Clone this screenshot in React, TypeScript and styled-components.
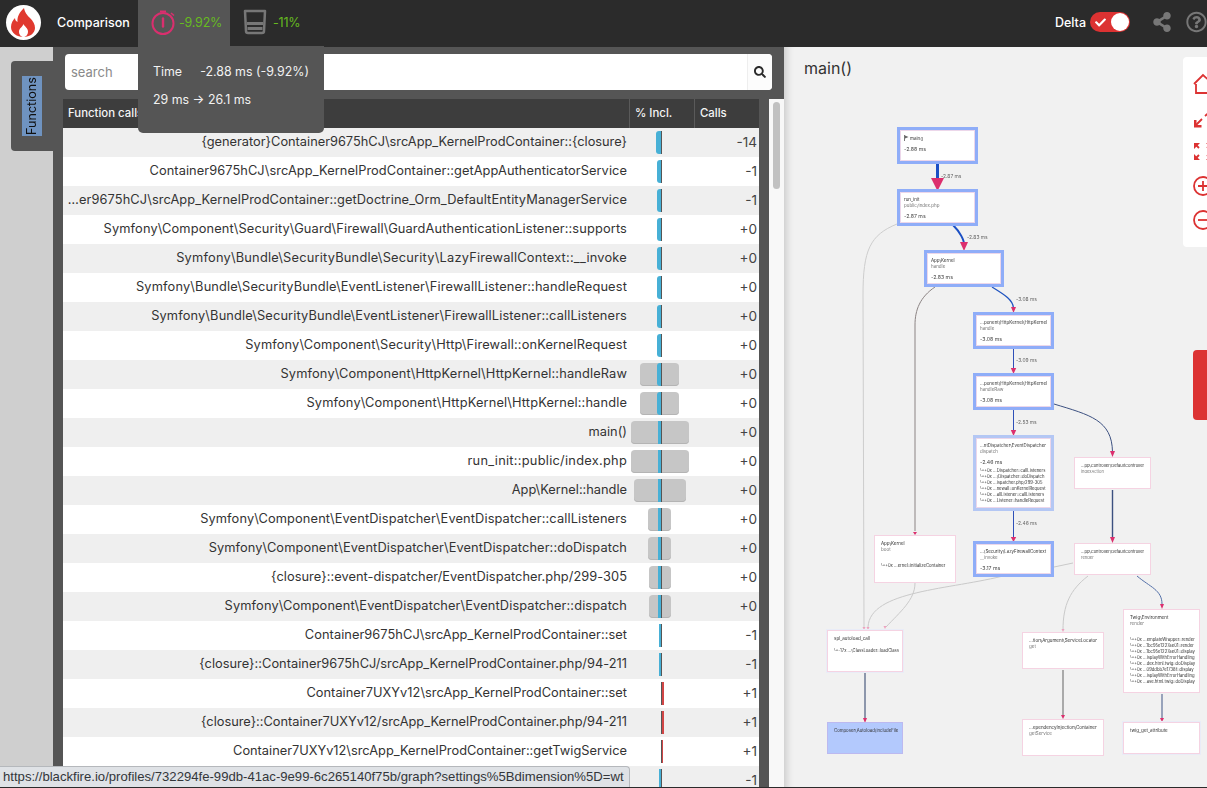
import React from "react";
import styled, { createGlobalStyle, css } from "styled-components";
import { FaSearch, FaShareAlt, FaRegQuestionCircle, FaCheck } from "react-icons/fa";

const UI = `"Inter", "Noto Sans", "Liberation Sans", sans-serif`;

const Global = createGlobalStyle`
  html, body { margin: 0; padding: 0; height: 788px; overflow: hidden; background: #f1f1f1; }
  #root { height: 788px; }
  * { box-sizing: border-box; }
`;

const Page = styled.div`
  width: 1207px; height: 788px; display: flex; flex-direction: column; overflow: hidden; position: relative;
  font-family: ${UI}; font-size: 13px; color: #333;
  &::after { content: ""; position: absolute; left: 0; right: 0; bottom: 0; height: 1px; background: #2b2b2b; z-index: 8; }
`;
const Header = styled.header`
  height: 47px; flex: none; background: #2b2b2b; display: flex; align-items: center; position: relative; z-index: 5;
`;
const Logo = styled.div`
  width: 35px; height: 35px; border-radius: 50%; background: #fff; margin: 0 0 3px 6px; display: flex; align-items: center; justify-content: center;
`;
const Title = styled.div`
  color: #fff; font-weight: 500; font-size: 12.5px; margin-left: 16px; width: 81px; margin-bottom: 3px;
`;
const Metric = styled.div<{ $active?: boolean; $w: number }>`
  width: ${p => p.$w}px; height: 47px; display: flex; align-items: center; padding-left: 13px; gap: 6px; padding-bottom: 3px;
  color: #67bb1f; font-size: 12.5px; letter-spacing: -0.2px;
  ${p => p.$active && css`background: #555;`}
`;
const MetricValue = styled.span<{ $shift?: boolean }>`${p => p.$shift && css`margin-left: -4px;`}`;
const Spacer = styled.div`flex: 1;`;
const DeltaLabel = styled.div`color: #fff; font-weight: 500; font-size: 12.5px; margin-bottom: 3px;`;
const Toggle = styled.div`
  width: 40px; height: 20px; background: #dc3232; border-radius: 10px; margin: 0 22px 3px 4px; position: relative; display: flex; align-items: center; padding-left: 5px; color: #fff; font-size: 11px;
  &::after { content: ""; position: absolute; right: 1px; top: 1px; width: 18px; height: 18px; border-radius: 50%; background: #fff; }
`;
const HeadIcon = styled.div<{ $w: number }>`
  width: ${p => p.$w}px; color: #777; display: flex; margin-bottom: 3px; flex: none;
`;
const Tip = styled.div`
  position: absolute; left: 138px; top: 46px; width: 186px; height: 87px; background: #555; border-radius: 0 0 5px 5px; z-index: 6; color: #f2f2f2; font-size: 12.4px; padding: 16px 15px; white-space: nowrap;
`;
const TipRow = styled.div`display: flex; height: 28px; line-height: 19px;`;
const TipKey = styled.span`width: 50px;`;

const Main = styled.div`flex: 1; display: flex; min-height: 0;`;
const Rail = styled.div`width: 53px; flex: none; background: #cfcfcf; padding: 14px 0 0 11px;`;
const RailTab = styled.div`
  width: 42px; height: 90px; background: #555; border-radius: 4px 0 0 4px; display: flex; justify-content: center; padding: 15px 0 0 0;
`;
const RailText = styled.span`
  writing-mode: vertical-rl; transform: rotate(180deg); background: #6f93c0; color: #111; height: 60px; width: 20px; font-size: 12.6px; line-height: 20px; text-align: center; white-space: nowrap;
`;
const Panel = styled.div`width: 731px; flex: none; background: #555; padding: 7px 12px 0; display: flex; flex-direction: column; min-height: 0;`;
const Search = styled.div`
  height: 36px; flex: none; background: #fff; border-radius: 4px; display: flex; align-items: center; 
`;
const SearchText = styled.div`flex: 1; color: #8a8a8a; font-size: 13px; padding-left: 6px;`;
const SearchBtn = styled.div`
  width: 25px; height: 36px; background: #fcfcfc; border-left: 1px solid #eee; display: flex; align-items: center; justify-content: center; color: #2b2b2b; font-size: 12px; border-radius: 0 4px 4px 0;
`;
const TableWrap = styled.div`flex: 1; display: flex; gap: 10px; margin: 9px -12px 0 -2px; min-height: 0;`;
const Table = styled.div`width: 696px; flex: none; overflow: hidden;`;
const HeadRow = styled.div`
  height: 29px; background: #3d3d3d; color: #f4f4f4; display: grid; grid-template-columns: 566px 65px 65px; font-weight: 500; font-size: 11.4px; line-height: 29px;
`;
const HeadCell = styled.div<{ $line?: boolean }>`
  padding-left: 5px; ${p => p.$line && css`border-left: 1px solid #5a5a5a;`}
`;
const Row = styled.div<{ $odd: boolean }>`
  height: 29px; display: grid; grid-template-columns: 564px 67px 65px; background: ${p => p.$odd ? "#efefef" : "#fff"}; align-items: center;
`;
const FnName = styled.div<{ $track: number }>`
  white-space: nowrap; overflow: hidden; color: #333; font-size: 12.8px; letter-spacing: ${p => p.$track}px; display: flex; justify-content: flex-end; padding-bottom: 2px;
`;
const BarCell = styled.div`position: relative; height: 23px;`;
const GrayBar = styled.div`position: absolute; top: 0; height: 23px; background: #c6c6c6; border-radius: 4px; box-shadow: inset 0 -1px 0 #b4b4b4;`;
const ValueBar = styled.div<{ $red?: boolean; $round?: boolean }>`
  position: absolute; top: 0; height: 23px; background: ${p => p.$red ? "#d14545" : "#47b0d6"};
  ${p => p.$round && css`border-radius: 3px 0 0 3px;`}
`;
const Axis = styled.div`position: absolute; top: 0; height: 23px; width: 1px; left: 34px; background: #555;`;
const Calls = styled.div`text-align: right; padding: 0 2px 2px 0; font-size: 13.6px; color: #444;`;
const Track = styled.div`width: 15px; flex: none; background: #f8f8f8; padding: 3px 4px 0 4px;`;
const Thumb = styled.div`height: 87px; background: #c1c1c1; border-radius: 4px;`;
const Status = styled.div`
  position: absolute; left: 0; bottom: 1px; width: 630px; height: 21px; background: #dfe2e6; border: 1px solid #b5b8bc; border-left: 0; border-bottom: 0; border-radius: 0 4px 0 0; z-index: 7;
  padding-left: 3px; line-height: 20px; color: #33363a; font-family: "Liberation Sans", sans-serif; font-size: 13.13px; white-space: nowrap; overflow: hidden;
`;

const Graph = styled.div`
  flex: 1; position: relative; background: #f1f1f1; overflow: hidden; box-shadow: inset 10px 0 8px -8px rgba(0,0,0,.18);
`;
const GraphTitle = styled.div`margin: 11px 0 0 20px; font-size: 16px; color: #333; line-height: 20px;`;
const Edges = styled.svg`position: absolute; left: 0; top: 0; width: 423px; height: 741px; filter: blur(.25px);`;
const EdgeLabel = styled.span<{ $x: number; $y: number }>`
  position: absolute; left: ${p => p.$x - 784}px; top: ${p => p.$y - 47}px; font-size: 4.9px; line-height: 6px; color: #666; white-space: nowrap; filter: blur(.25px);
`;
const variantStyle = {
  strong: css`border: 3px solid #8fadf8; box-shadow: inset 0 0 0 1px #ecd7ea; background: #fff;`,
  medium: css`border: 3px solid #b4c7f4; box-shadow: inset 0 0 0 1px #ecd7ea; background: #fff;`,
  plain: css`border: 1px solid #f5d3e2; background: #fff;`,
  halo: css`border: 1px solid #f5d3e2; background: #fff; box-shadow: 0 0 0 1px #e9ecf7;`,
  fill: css`border: 1px solid #bcb9f0; background: #b3c9fd;`,
};
type Variant = keyof typeof variantStyle;
const Node = styled.div<{ $x: number; $y: number; $w: number; $h: number; $v: Variant; $fs: number }>`
  position: absolute; left: ${p => p.$x - 784}px; top: ${p => p.$y - 47}px; width: ${p => p.$w}px; height: ${p => p.$h}px;
  ${p => variantStyle[p.$v]}
  padding: ${p => (p.$v === "strong" || p.$v === "medium") ? "5px 1px 0 4px" : "5px 1px 0 6px"}; font-size: ${p => p.$fs}px; line-height: 6px; color: #333; overflow: hidden; white-space: nowrap; filter: blur(.25px);
`;
const NodeName = styled.div``;
const NodeSub = styled.div`color: #777;`;
const NodeTime = styled.div`margin-top: 4px; color: #444; font-size: 5.2px;`;
const NodeCalls = styled.div<{ $gap: number }>`margin-top: ${p => p.$gap}px; font-size: 4.2px;`;
const Tools = styled.div`
  position: absolute; left: 399px; top: 10px; width: 40px; height: 190px; background: #fff; border-radius: 4px; color: #dc3232;
  display: flex; flex-direction: column; padding: 17px 0 0 10px; gap: 14px;
`;
const RedTab = styled.div`
  position: absolute; left: 409px; top: 303px; width: 30px; height: 70px; background: #dc3232; border-radius: 4px;
`;

const rows: { n: string; c: string; t: number; g?: [number, number]; b: [number, number]; red?: boolean; round?: boolean }[] = [
  { n: "{generator}Container9675hCJ\\srcApp_KernelProdContainer::{closure}", t: 0, c: "-14", b: [656, 662], round: true },
  { n: "Container9675hCJ\\srcApp_KernelProdContainer::getAppAuthenticatorService", t: .08, c: "-1", b: [657, 662], round: true },
  { n: "…er9675hCJ\\srcApp_KernelProdContainer::getDoctrine_Orm_DefaultEntityManagerService", t: .1, c: "-1", b: [657, 662], round: true },
  { n: "Symfony\\Component\\Security\\Guard\\Firewall\\GuardAuthenticationListener::supports", t: .14, c: "+0", b: [657, 662], round: true },
  { n: "Symfony\\Bundle\\SecurityBundle\\Security\\LazyFirewallContext::__invoke", t: .22, c: "+0", b: [657, 662], round: true },
  { n: "Symfony\\Bundle\\SecurityBundle\\EventListener\\FirewallListener::handleRequest", t: .16, c: "+0", b: [657, 662], round: true },
  { n: "Symfony\\Bundle\\SecurityBundle\\EventListener\\FirewallListener::callListeners", t: .145, c: "+0", b: [657, 662], round: true },
  { n: "Symfony\\Component\\Security\\Http\\Firewall::onKernelRequest", t: .14, c: "+0", b: [657, 662], round: true },
  { n: "Symfony\\Component\\HttpKernel\\HttpKernel::handleRaw", t: .14, c: "+0", g: [640, 679], b: [657, 662], round: true },
  { n: "Symfony\\Component\\HttpKernel\\HttpKernel::handle", t: .146, c: "+0", g: [640, 679], b: [657, 662], round: true },
  { n: "main()", t: 0, c: "+0", g: [631, 689], b: [658, 662] },
  { n: "run_init::public/index.php", t: .27, c: "+0", g: [631, 689], b: [658, 662] },
  { n: "App\\Kernel::handle", t: 0, c: "+0", g: [634, 686], b: [658, 662] },
  { n: "Symfony\\Component\\EventDispatcher\\EventDispatcher::callListeners", t: .123, c: "+0", g: [648, 671], b: [658, 662] },
  { n: "Symfony\\Component\\EventDispatcher\\EventDispatcher::doDispatch", t: .11, c: "+0", g: [648, 671], b: [658, 662] },
  { n: "{closure}::event-dispatcher/EventDispatcher.php/299-305", t: .055, c: "+0", g: [649, 671], b: [658, 662] },
  { n: "Symfony\\Component\\EventDispatcher\\EventDispatcher::dispatch", t: .13, c: "+0", g: [649, 671], b: [658, 662] },
  { n: "Container9675hCJ\\srcApp_KernelProdContainer::set", t: .06, c: "-1", b: [659, 662] },
  { n: "{closure}::Container9675hCJ/srcApp_KernelProdContainer.php/94-211", t: .03, c: "-1", b: [659, 662] },
  { n: "Container7UXYv12\\srcApp_KernelProdContainer::set", t: .04, c: "+1", b: [661, 664], red: true },
  { n: "{closure}::Container7UXYv12/srcApp_KernelProdContainer.php/94-211", t: 0, c: "+1", b: [661, 664], red: true },
  { n: "Container7UXYv12\\srcApp_KernelProdContainer::getTwigService", t: 0, c: "+1", b: [661, 663], red: true },
  { n: "", t: 0, c: "-1", b: [659, 662] },
];

type N = { x: number; y: number; w: number; h: number; v: Variant; name?: string; sub?: string; time?: string; calls?: string[]; flag?: boolean; gap?: number; fs?: number };
const nodes: N[] = [
  { x: 897, y: 127, w: 81, h: 37, v: "strong", name: "main()", time: "-2.88 ms", flag: true },
  { x: 897, y: 189, w: 81, h: 37, v: "strong", name: "run_init", sub: "public/index.php", time: "-2.87 ms" },
  { x: 924, y: 250, w: 80, h: 37, v: "strong", name: "App\\Kernel", sub: "handle", time: "-2.83 ms" },
  { x: 973, y: 312, w: 81, h: 37, v: "strong", name: "…ponent\\HttpKernel\\HttpKernel", sub: "handle", time: "-3.08 ms" },
  { x: 973, y: 373, w: 81, h: 37, v: "strong", name: "…ponent\\HttpKernel\\HttpKernel", sub: "handleRaw", time: "-3.08 ms" },
  { x: 973, y: 435, w: 81, h: 76, v: "medium", fs: 4.4, name: "…ntDispatcher\\EventDispatcher", sub: "dispatch", time: "-2.46 ms", gap: 3, calls: ["↳+0x  …Dispatcher::callListeners", "↳+0x  …\\Dispatcher::doDispatch", "↳+0x  …ispatcher.php/299-305", "↳+0x  …newalI::onKernelRequest", "↳+0x  …allListener::callListeners", "↳+0x  …Listener::handleRequest"] },
  { x: 973, y: 541, w: 81, h: 36, v: "strong", fs: 4.4, name: "…\\Security\\LazyFirewallContext", sub: "__invoke", time: "-3.17 ms" },
  { x: 874, y: 535, w: 82, h: 48, v: "plain", name: "App\\Kernel", sub: "boot", gap: 10, calls: ["↳+0x  …ernel::initializeContainer"] },
  { x: 1074, y: 457, w: 77, h: 32, v: "plain", fs: 4.1, name: "…pp\\Controller\\DefaultController", sub: "indexAction" },
  { x: 1074, y: 543, w: 77, h: 32, v: "plain", fs: 4.1, name: "…pp\\Controller\\DefaultController", sub: "render" },
  { x: 827, y: 630, w: 76, h: 42, v: "halo", name: "spl_autoload_call", gap: 6, calls: ["↳-17x  …\\ClassLoader::loadClass"] },
  { x: 827, y: 722, w: 76, h: 32, v: "fill", fs: 4.3, name: "Composer\\Autoload\\includeFile" },
  { x: 1022, y: 632, w: 82, h: 37, v: "plain", name: "…tion\\Argument\\ServiceLocator", sub: "get" },
  { x: 1022, y: 719, w: 82, h: 37, v: "plain", name: "…ependencyInjection\\Container", sub: "getService" },
  { x: 1123, y: 609, w: 77, h: 84, v: "plain", name: "Twig\\Environment", sub: "render", gap: 10, calls: ["↳+0x  …emplateWrapper::render", "↳+0x  …1bc95e1227ae01::render", "↳+0x  …1bc95e1227ae01::display", "↳+0x  …isplayWithErrorHandling", "↳+0x  …dex.html.twig::doDisplay", "↳+0x  …09ddbb7e1738f::display", "↳+0x  …isplayWithErrorHandling", "↳+0x  …ase.html.twig::doDisplay"] },
  { x: 1123, y: 722, w: 77, h: 32, v: "halo", name: "twig_get_attribute" },
];
const labels: [string, number, number][] = [
  ["-2.87 ms", 941, 173], ["-2.83 ms", 967, 234], ["-3.08 ms", 1016, 296], ["-3.09 ms", 1016, 357], ["-2.53 ms", 1016, 419], ["-2.46 ms", 1016, 520],
];
const edges: [string, string, number][] = [
  ["M897 224C870 235 863 250 863 295L864 627", "#cdcdcd", 1],
  ["M935 287C920 297 915 310 915 325L915 531", "#8b8383", 1],
  ["M915 583C915 600 900 612 886 627", "#c9c9c9", 1],
  ["M1007 575C950 590 870 590 868 627", "#c9c9c9", 1],
  ["M1054 567L1073 563", "#c9c9c9", 1],
  ["M1088 576C1070 590 1063 605 1063 630", "#c9c9c9", 1],
  ["M937.5 164V180", "#1b4fc4", 3],
  ["M953 225C960 232 964 240 964 244", "#1b4fc4", 2],
  ["M992 287C1005 295 1013 300 1013.5 308", "#1f54c0", 1.3],
  ["M1013.5 349V370", "#2f50b8", 1],
  ["M1013.5 410V432", "#2f50b8", 1],
  ["M1013.5 511V537", "#2f50b8", 1],
  ["M1054 404C1090 415 1112 420 1112.5 452", "#3c5080", 1],
  ["M1112.5 490V538", "#3c5080", 1.4],
  ["M1137 576C1150 587 1162 590 1162 604", "#5470a8", 1],
  ["M865 672V718", "#8d97ac", 2],
  ["M1063 670V715", "#aaaaaa", 2],
  ["M1162 694V718", "#7a88a8", 1.5],
];
const arrows: [number, number, number, number, string][] = [
  [937.5, 191, 6.5, 13, "#dc2f6e"], [964, 251, 4, 9, "#dc2f6e"], [1013.5, 313, 2.5, 6, "#dc2f6e"],
  [1013.5, 374, 2.7, 6, "#dc2f6e"], [1013.5, 436, 2.7, 6, "#dc2f6e"], [1013.5, 542, 2.7, 5, "#dc2f6e"],
  [1112.5, 457, 2.5, 6, "#dc2f6e"], [1112.5, 543, 2.5, 6, "#dc2f6e"], [1162, 609, 2, 5, "#dc2f6e"],
  [915, 535, 2, 3, "#dc2f6e"], [865, 723, 2, 5, "#dc2f6e"], [1063, 719, 2, 4, "#dc2f6e"], [1162, 722, 2, 4, "#dc2f6e"],
  [864, 630, 1.5, 3, "#eda3c0"], [868, 630, 1.5, 3, "#eda3c0"], [885, 629, 1.5, 3, "#eda3c0"], [1063, 632, 1.5, 3, "#eda3c0"],
];

const FlameLogo = () => (
  <svg width="25" height="29" viewBox="0 0 25 29">
    <path d="M13 0c1 5 3 7 6 10 3 3 5 6 5 10 0 5-5 9-11.500 9S0 25 0 19c0-4 2-7 4-9 0 2 1 3 2.500 4C6 8 9 4 13 0z" fill="#e0392f" />
    <path d="M12.500 16c1 2.500 4.500 4 4.500 7.500 0 3-2 5.500-4.500 5.500S8 26.500 8 23.500c0-3 3.500-4.500 4.500-7.500z" fill="#fff" />
  </svg>
);
const Stopwatch = () => (
  <svg width="26" height="28" viewBox="0 0 26 28" fill="none" stroke="#d92f6e">
    <circle cx="12" cy="15.500" r="10.500" strokeWidth="2" />
    <path d="M12 10.500v8" strokeWidth="2.400" strokeLinecap="round" />
    <path d="M9 3.500h6" strokeWidth="2" />
    <path d="M20 5l3 2.500" strokeWidth="1.600" />
  </svg>
);
const Glass = () => (
  <svg width="24" height="26" viewBox="0 0 24 26" fill="none">
    <path d="M2 2h20l-1 20a2 2 0 0 1-2 2H5a2 2 0 0 1-2-2z" stroke="#777" strokeWidth="2.500" strokeLinejoin="round" />
    <path d="M4 13h16v3H4zM4.500 18h15v3h-15z" fill="#777" />
  </svg>
);
const Flag = () => (
  <svg width="5" height="6" viewBox="0 0 5 6" style={{ verticalAlign: "-1px", marginRight: 1 }}>
    <path d="M.5 0v6" stroke="#555" strokeWidth=".8" /><path d="M1 .5l3.500 1.500L1 3.500z" fill="#666" />
  </svg>
);
const ToolIcon = styled.svg`width: 24px; height: 20px; flex: none; fill: none; stroke: currentColor; stroke-width: 1.8; overflow: visible;`;
const Corner = styled.path`fill: currentColor; stroke: none;`;

export default function App() {
  return (
    <Page>
      <Global />
      <Header>
        <Logo><FlameLogo /></Logo>
        <Title>Comparison</Title>
        <Metric $active $w={92}><Stopwatch /><MetricValue $shift>-9.92%</MetricValue></Metric>
        <Metric $w={100}><Glass /><MetricValue>-11%</MetricValue></Metric>
        <Spacer />
        <DeltaLabel>Delta</DeltaLabel>
        <Toggle><FaCheck /></Toggle>
        <HeadIcon $w={34}><FaShareAlt size={20} /></HeadIcon>
        <HeadIcon $w={21}><FaRegQuestionCircle size={22} /></HeadIcon>
      </Header>
      <Tip>
        <TipRow><TipKey>Time</TipKey><span>-2.88 ms (-9.92%)</span></TipRow>
        <TipRow>29 ms → 26.1 ms</TipRow>
      </Tip>
      <Main>
        <Rail><RailTab><RailText>Functions</RailText></RailTab></Rail>
        <Panel>
          <Search>
            <SearchText>search</SearchText>
            <SearchBtn><FaSearch /></SearchBtn>
          </Search>
          <TableWrap>
            <Table>
              <HeadRow>
                <HeadCell>Function calls</HeadCell>
                <HeadCell $line>% Incl.</HeadCell>
                <HeadCell $line>Calls</HeadCell>
              </HeadRow>
              {rows.map((r, i) => (
                <Row key={i} $odd={i % 2 === 0}>
                  <FnName $track={r.t}>{r.n}</FnName>
                  <BarCell>
                    {r.g && <GrayBar style={{ left: r.g[0] - 627, width: r.g[1] - r.g[0] }} />}
                    <ValueBar $red={r.red} $round={r.round} style={{ left: r.b[0] - 627, width: r.b[1] - r.b[0] }} />
                    <Axis />
                  </BarCell>
                  <Calls>{r.c}</Calls>
                </Row>
              ))}
            </Table>
            <Track><Thumb /></Track>
          </TableWrap>
        </Panel>
        <Graph>
          <GraphTitle>main()</GraphTitle>
          <Edges viewBox="784 47 423 741" fill="none">
            {edges.map(([d, c, w], i) => <path key={i} d={d} stroke={c} strokeWidth={w} />)}
            {arrows.map(([x, y, hw, h, c], i) => <path key={i} d={`M${x - hw} ${y - h}H${x + hw}L${x} ${y}z`} fill={c} />)}
          </Edges>
          {labels.map(([t, x, y]) => <EdgeLabel key={t + y} $x={x} $y={y}>{t}</EdgeLabel>)}
          {nodes.map((n, i) => (
            <Node key={i} $x={n.x} $y={n.y} $w={n.w} $h={n.h} $v={n.v} $fs={n.fs ?? 4.5}>
              <NodeName>{n.flag && <Flag />}{n.name}</NodeName>
              {n.sub && <NodeSub>{n.sub}</NodeSub>}
              {n.time && <NodeTime>{n.time}</NodeTime>}
              {n.calls && <NodeCalls $gap={n.gap ?? 6}>{n.calls.map(c => <div key={c}>{c}</div>)}</NodeCalls>}
            </Node>
          ))}
          <Tools>
            <ToolIcon viewBox="0 0 24 20"><path d="M1 10L10 1l10 9M3 10v9h15v-9" /></ToolIcon>
            <ToolIcon viewBox="0 0 24 20"><path d="M2 18l7-7M12 8l7-6" /><Corner d="M1 12v7.500h7.500v-2.500H3.500v-5zM14 0h7v7l-2.500-1V2.500H15z" /></ToolIcon>
            <ToolIcon viewBox="0 0 24 20"><path d="M2 2l4 4M2 17l4-4M18 2l-4 4M18 17l-4-4" /><Corner d="M1 1h6L1 7zM1 18h6l-6-6zM19 1h-6l6 6zM19 18h-6l6-6z" /></ToolIcon>
            <ToolIcon viewBox="0 0 24 20"><circle cx="10" cy="10" r="9" /><path d="M10 5v10M5 10h10" /></ToolIcon>
            <ToolIcon viewBox="0 0 24 20"><circle cx="10" cy="10" r="9" /><path d="M5 10h10" /></ToolIcon>
          </Tools>
          <RedTab />
        </Graph>
      </Main>
      <Status>https://blackfire.io/profiles/732294fe-99db-41ac-9e99-6c265140f75b/graph?settings%5Bdimension%5D=wt</Status>
    </Page>
  );
}
